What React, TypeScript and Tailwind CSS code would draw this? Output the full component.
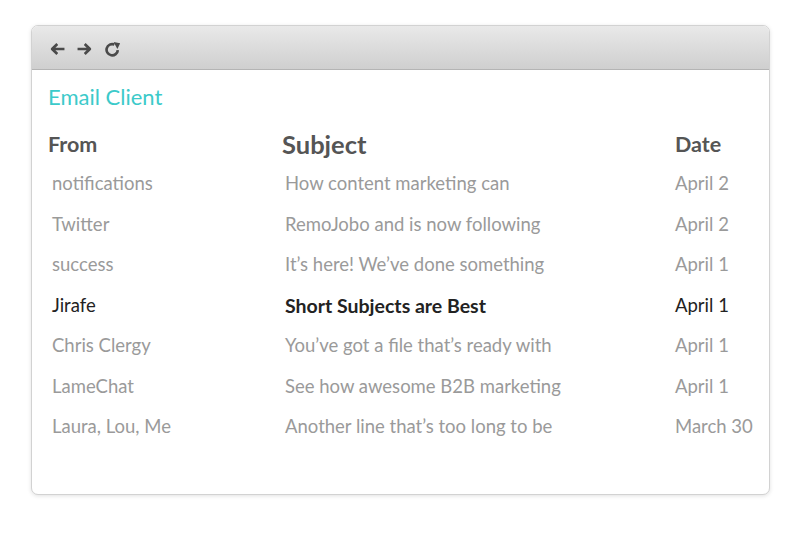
import * as React from 'react'

type Mail = {
    from: string
    subject: string
    date: string
    unread?: boolean
}

const mails: Mail[] = [
    { from: 'notifications', subject: 'How content marketing can', date: 'April 2' },
    { from: 'Twitter', subject: 'RemoJobo and is now following', date: 'April 2' },
    { from: 'success', subject: 'It’s here! We’ve done something', date: 'April 1' },
    { from: 'Jirafe', subject: 'Short Subjects are Best', date: 'April 1', unread: true },
    { from: 'Chris Clergy', subject: 'You’ve got a file that’s ready with', date: 'April 1' },
    { from: 'LameChat', subject: 'See how awesome B2B marketing', date: 'April 1' },
    { from: 'Laura, Lou, Me', subject: 'Another line that’s too long to be', date: 'March 30' },
]

function Back() {
    return (
        <svg width="15" height="14" viewBox="0 0 14 13" fill="none" stroke="currentColor" strokeWidth="2.5" strokeLinejoin="round">
            <path d="M13.5 6.5H2M6.8 1.8L2 6.5L6.8 11.2" />
        </svg>
    )
}

function Forward() {
    return (
        <svg width="15" height="14" viewBox="0 0 14 13" fill="none" stroke="currentColor" strokeWidth="2.5" strokeLinejoin="round">
            <path d="M0.5 6.5H12M7.2 1.8L12 6.5L7.2 11.2" />
        </svg>
    )
}

function Reload() {
    return (
        <svg width="17" height="16" viewBox="0 0 16 15">
            <path d="M13 8.5A5.3 5.3 0 1 1 9.8 3.3" fill="none" stroke="currentColor" strokeWidth="2.5" />
            <path d="M9 0.8L15.2 2.2L12.6 7.6Z" fill="currentColor" />
        </svg>
    )
}

export default function App() {
    return (
        <div className="w-[800px] h-[537px] bg-white pt-[25px] pl-[31px] font-['Lato',sans-serif]">
            <div className="w-[739px] h-[470px] rounded-[7px] border border-[#d2d2d2] bg-white shadow-[0_1px_4px_rgba(0,0,0,0.12)] overflow-hidden">
                <div className="h-[44px] flex items-center gap-[12px] pl-[18px] pt-[2px] bg-gradient-to-b from-[#e9e9e9] to-[#cfcfcf] border-b border-[#b4b4b4] text-[#4a4a4a]">
                    <Back />
                    <Forward />
                    <Reload />
                </div>
                <div className="pl-[16px] pr-[14px] pt-[14px]">
                    <h1 className="text-[22px] leading-[26px] text-[#3ccaca]">Email Client</h1>
                    <div className="grid grid-cols-[234px_393px_1fr] mt-[14px] items-center">
                        <div className="text-[21.5px] font-bold text-[#555] h-[40px] flex items-center">From</div>
                        <div className="text-[25.5px] font-bold text-[#555] h-[40px] flex items-center">Subject</div>
                        <div className="text-[21.5px] font-bold text-[#555] h-[40px] flex items-center">Date</div>
                        {mails.map((mail) => (
                            <React.Fragment key={mail.from}>
                                <div className={`h-[40.5px] flex items-center pl-[4px] text-[18.5px] ${mail.unread ? 'text-[#222]' : 'text-[#9a9a9a]'}`}>
                                    {mail.from}
                                </div>
                                <div className={`h-[40.5px] flex items-center pl-[3px] ${mail.unread ? 'text-[#222] font-bold text-[19.5px]' : 'text-[#9a9a9a] text-[18.5px]'}`}>
                                    {mail.subject}
                                </div>
                                <div className={`h-[40.5px] flex items-center text-[18.5px] ${mail.unread ? 'text-[#222]' : 'text-[#9a9a9a]'}`}>
                                    {mail.date}
                                </div>
                            </React.Fragment>
                        ))}
                    </div>
                </div>
            </div>
        </div>
    )
}
